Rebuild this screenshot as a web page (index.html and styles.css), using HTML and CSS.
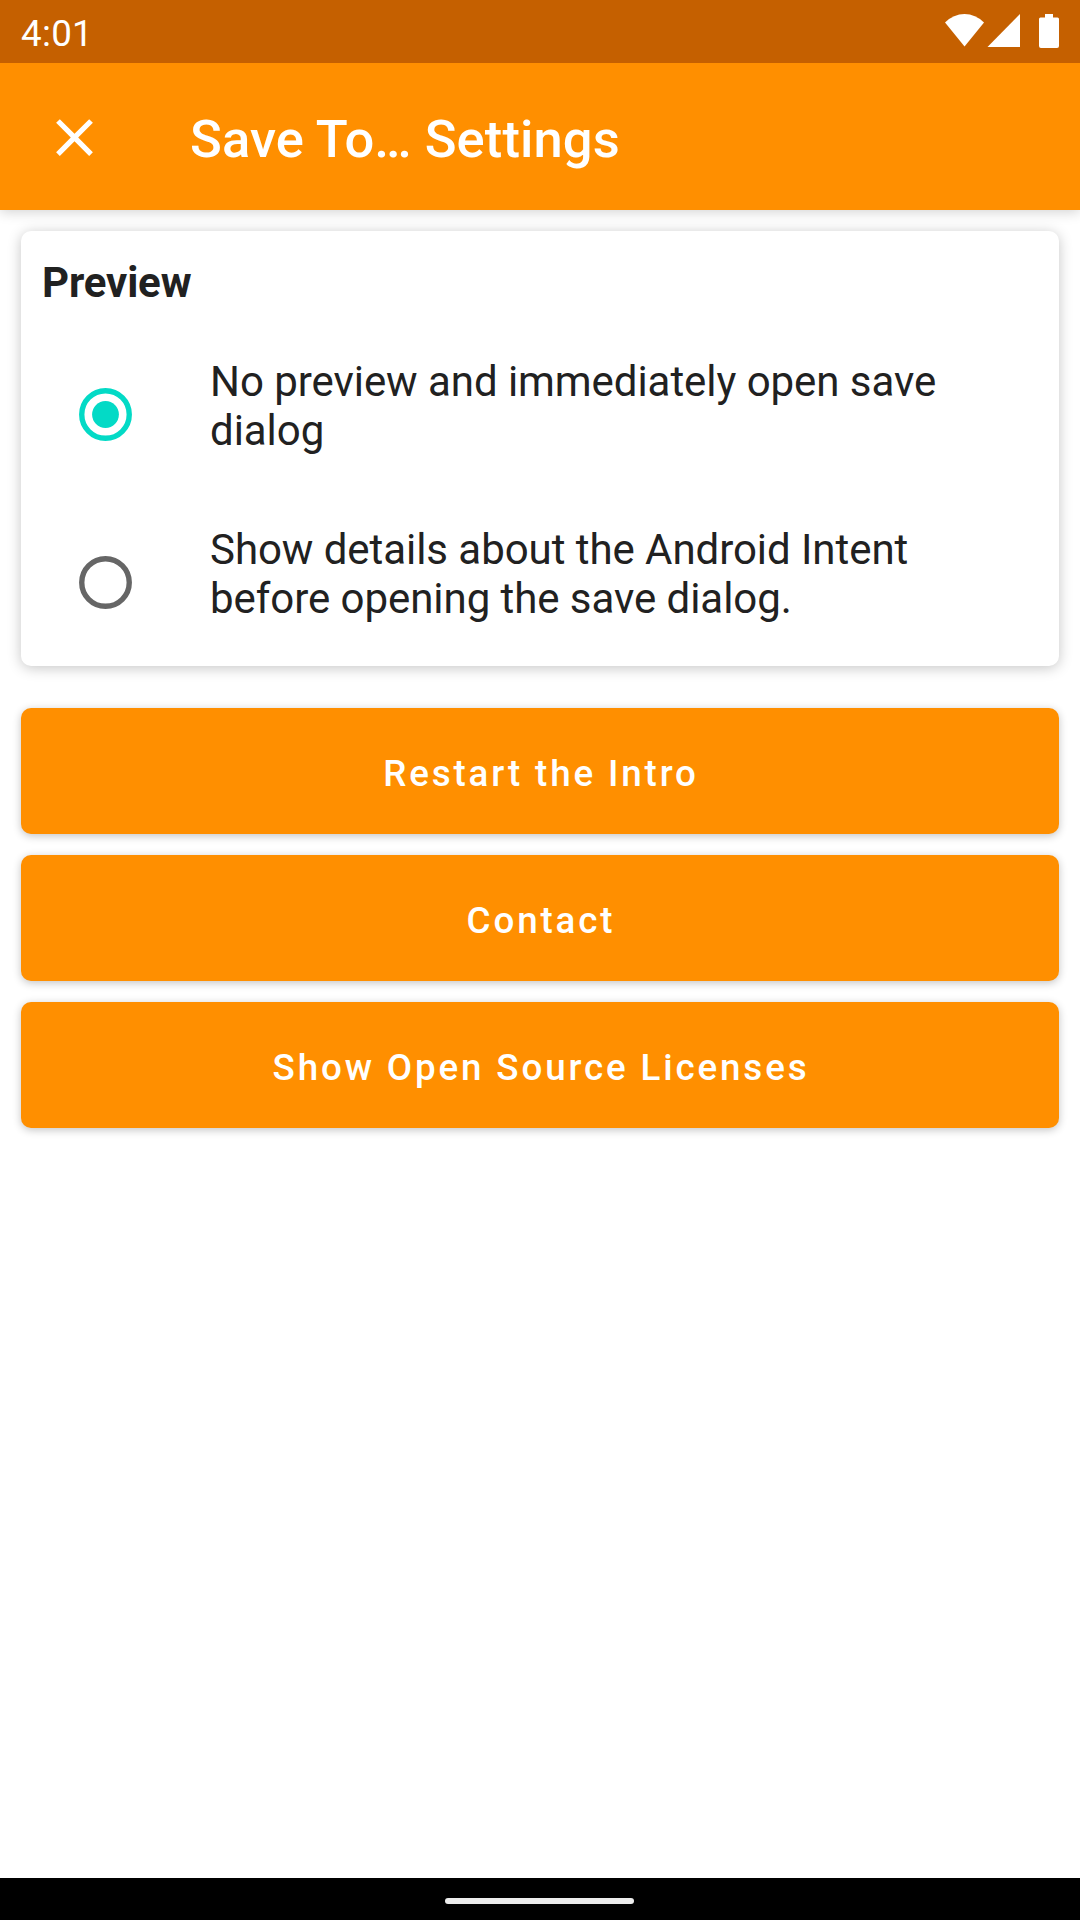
FILE: index.html
```html
<!DOCTYPE html>
<html lang="en">
<head>
<meta charset="utf-8">
<title>Save To… Settings</title>
<link rel="stylesheet" href="styles.css">
</head>
<body>
<div class="screen">
  <div class="status-bar">
    <span class="clock">4:01</span>
    <svg class="status-icons" width="116" height="36" viewBox="0 0 116 36" fill="#fff" aria-hidden="true">
      <path d="M1 9.5Q9.500 1 20.500 1T40 9.500L20.500 33.500Z"/>
      <path d="M43.500 34H76V1Z"/>
      <path d="M101 1h8v3.500h4.500q1.500 0 1.500 1.500v27q0 2-2 2h-16q-2 0-2-2v-27q0-1.500 1.500-1.500h4.500z"/>
    </svg>
  </div>
  <header class="app-bar">
    <button class="close" aria-label="Close">
      <svg width="63" height="63" viewBox="0 0 24 24" fill="#fff"><path d="M19 6.410L17.590 5 12 10.590 6.410 5 5 6.410 10.590 12 5 17.590 6.410 19 12 13.410 17.590 19 19 17.590 13.410 12z"/></svg>
    </button>
    <h1 class="title">Save To… Settings</h1>
  </header>
  <main class="content">
    <section class="card">
      <h2 class="card-title">Preview</h2>
      <div class="option">
        <svg class="radio" width="63" height="63" viewBox="0 0 24 24" fill="none"><circle cx="12" cy="12" r="9.050" stroke="#03dac6" stroke-width="2.050"/><circle cx="12" cy="12" r="5.100" fill="#03dac6"/></svg>
        <span class="label">No preview and immediately open save<br>dialog</span>
      </div>
      <div class="option">
        <svg class="radio" width="63" height="63" viewBox="0 0 24 24" fill="none"><circle cx="12" cy="12" r="9.050" stroke="#666" stroke-width="2.050"/></svg>
        <span class="label">Show details about the Android Intent<br>before opening the save dialog.</span>
      </div>
    </section>
    <div class="actions">
      <button class="action">Restart the Intro</button>
      <button class="action">Contact</button>
      <button class="action">Show Open Source Licenses</button>
    </div>
  </main>
  <div class="nav-bar"><div class="handle"></div></div>
</div>
</body>
</html>
```
FILE: styles.css
```css
* {
  box-sizing: border-box;
}

body {
  margin: 0;
  background: #fff;
  color: #212121;
  font-family: Roboto, "Liberation Sans", sans-serif;
}

button {
  border: 0;
  margin: 0;
  padding: 0;
  background: none;
  font-family: inherit;
}

.screen {
  display: flex;
  flex-direction: column;
  width: 1080px;
  height: 1920px;
  overflow: hidden;
}

.status-bar {
  z-index: 1;
  display: flex;
  flex: none;
  align-items: flex-start;
  justify-content: space-between;
  height: 63px;
  padding: 12px 20px 0 21px;
  background: #c56000;
  color: #fff;
}

.clock {
  font-size: 36.75px;
  letter-spacing: 0.3px;
  line-height: 43px;
}

.status-icons {
  margin-top: 1px;
}

.app-bar {
  display: flex;
  flex: none;
  align-items: flex-start;
  gap: 84px;
  height: 147px;
  padding: 43px 43px 0;
  background: #ff8f00;
  box-shadow: 0 2px 12px rgba(0, 0, 0, 0.18);
}

.close,
.close svg {
  display: block;
}

.title {
  margin: 2px 0 0;
  color: #fff;
  font-size: 52.5px;
  font-weight: 500;
  letter-spacing: 0.1px;
  line-height: 62px;
}

.content {
  display: flex;
  flex: 1;
  flex-direction: column;
  gap: 42px;
  padding: 21px;
}

.card {
  height: 435px;
  padding: 27px 21px 0;
  border-radius: 10px;
  background: #fff;
  box-shadow: 0 2px 14px rgba(0, 0, 0, 0.23);
}

.card-title {
  margin: 0 0 50px;
  font-size: 42px;
  font-weight: 700;
  letter-spacing: -0.15px;
  line-height: 49px;
}

.option {
  display: flex;
  gap: 73px;
  height: 168px;
  padding-left: 32px;
}

.radio {
  flex: none;
  margin-top: 26px;
}

.label {
  font-size: 42px;
  letter-spacing: -0.055px;
  line-height: 49px;
  white-space: nowrap;
}

.actions {
  display: flex;
  flex-direction: column;
  gap: 21px;
}

.action {
  height: 126px;
  padding: 4px 0 0 2px;
  border-radius: 10px;
  background: #ff8f00;
  box-shadow: 0 2px 8px rgba(0, 0, 0, 0.24);
  color: #fff;
  font-size: 36.75px;
  font-weight: 500;
  letter-spacing: 2.86px;
  line-height: 43px;
}

.nav-bar {
  display: flex;
  flex: none;
  justify-content: center;
  height: 42px;
  padding: 20px 2px 0 0;
  background: #000;
}

.handle {
  width: 189px;
  height: 6px;
  border-radius: 3px;
  background: #ececec;
}
```
